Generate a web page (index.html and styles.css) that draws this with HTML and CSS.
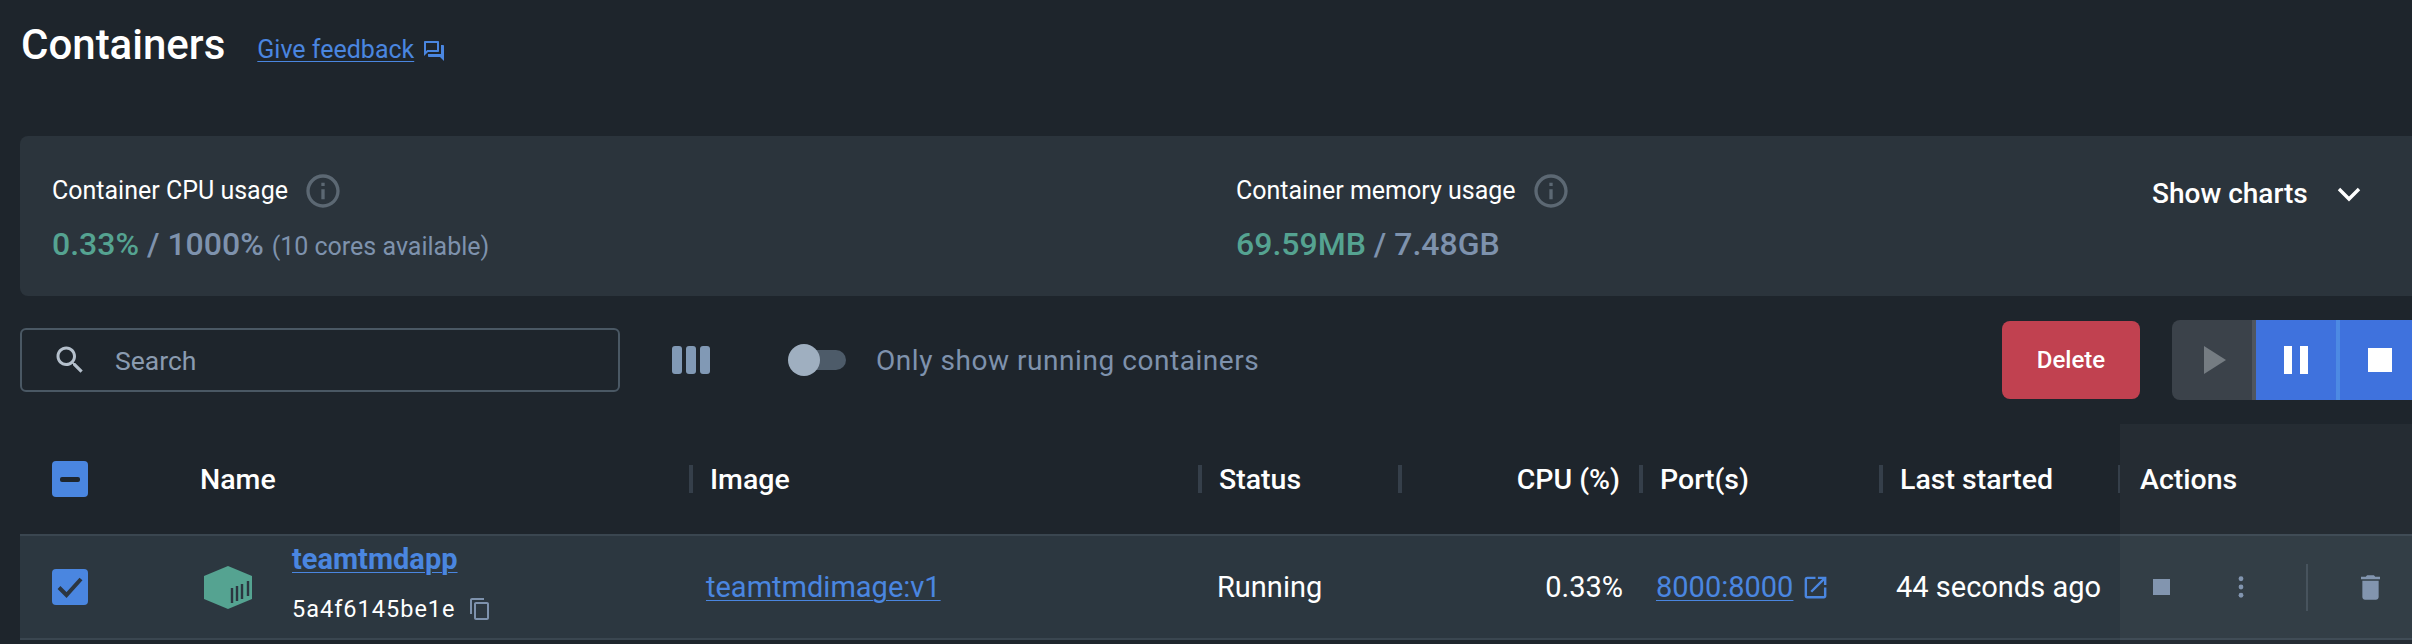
FILE: index.html
```html
<!DOCTYPE html>
<html lang="en">
<head>
  <meta charset="UTF-8">
  <title>Containers</title>
  <link rel="stylesheet" href="styles.css">
</head>
<body>
  <div class="page">
    <header class="title-bar">
      <h1>Containers</h1>
      <a class="link feedback" href="#">Give feedback</a>
      <svg class="feedback-icon" viewBox="0 0 24 24"><path d="M15 4v7H5.17L4 12.17V4h11m1-2H3c-.55 0-1 .45-1 1v14l4-4h10c.55 0 1-.45 1-1V3c0-.55-.45-1-1-1zm5 4h-2v9H6v2c0 .55.45 1 1 1h11l4 4V7c0-.55-.45-1-1-1z"/></svg>
    </header>

    <section class="usage">
      <div class="stat stat-cpu">
        <div class="stat-label">Container CPU usage
          <svg class="info-icon" viewBox="0 0 24 24"><path d="M11 7h2v2h-2zm0 4h2v6h-2zm1-9C6.48 2 2 6.48 2 12s4.48 10 10 10 10-4.48 10-10S17.52 2 12 2zm0 18c-4.41 0-8-3.59-8-8s3.59-8 8-8 8 3.59 8 8-3.59 8-8 8z"/></svg>
        </div>
        <div class="stat-value"><span class="green">0.33%</span> / 1000% <small>(10 cores available)</small></div>
      </div>
      <div class="stat stat-mem">
        <div class="stat-label">Container memory usage
          <svg class="info-icon" viewBox="0 0 24 24"><path d="M11 7h2v2h-2zm0 4h2v6h-2zm1-9C6.48 2 2 6.48 2 12s4.48 10 10 10 10-4.48 10-10S17.52 2 12 2zm0 18c-4.41 0-8-3.59-8-8s3.59-8 8-8 8 3.59 8 8-3.59 8-8 8z"/></svg>
        </div>
        <div class="stat-value"><span class="green">69.59MB</span> / 7.48GB</div>
      </div>
      <div class="show-charts">Show charts
        <svg class="chevron" viewBox="0 0 24 16"><path d="M2 3l10 10L22 3" fill="none" stroke="#fff" stroke-width="3.4"/></svg>
      </div>
    </section>

    <section class="toolbar">
      <div class="search">
        <svg class="search-icon" viewBox="0 0 24 24"><path d="M15.5 14h-.79l-.28-.27C15.41 12.59 16 11.11 16 9.5 16 5.91 13.09 3 9.5 3S3 5.91 3 9.5 5.91 16 9.5 16c1.61 0 3.09-.59 4.23-1.57l.27.28v.79l5 4.99L20.49 19l-4.99-5zm-6 0C7.01 14 5 11.99 5 9.5S7.01 5 9.5 5 14 7.01 14 9.5 11.99 14 9.5 14z"/></svg>
        <span>Search</span>
      </div>
      <div class="columns-btn"><i></i><i></i><i></i></div>
      <div class="toggle"><span class="track"></span><span class="thumb"></span></div>
      <span class="toggle-label">Only show running containers</span>
      <button class="delete-btn">Delete</button>
      <div class="run-group">
        <button class="run-btn play"><svg viewBox="0 0 22 28"><path d="M0 0l22 14L0 28z"/></svg></button>
        <button class="run-btn pause"><i></i><i></i></button>
        <button class="run-btn stop"><i></i></button>
      </div>
    </section>

    <section class="table">
      <div class="grid head">
        <div class="cell check-cell"><span class="check"><i class="dash"></i></span></div>
        <div class="cell">Name</div>
        <div class="cell sep">Image</div>
        <div class="cell sep">Status</div>
        <div class="cell sep right">CPU (%)</div>
        <div class="cell sep">Port(s)</div>
        <div class="cell sep">Last started</div>
        <div class="cell sep thin actions-head">Actions</div>
      </div>
      <div class="grid row">
        <div class="cell check-cell"><span class="check">
          <svg viewBox="0 0 36 36"><path d="M7 18.5l7.5 7.5L29 10" fill="none" stroke="#2c3640" stroke-width="4"/></svg>
        </span></div>
        <div class="cell name-cell">
          <svg class="box-icon" viewBox="0 0 48 43">
            <path d="M24 0l24 10v23L24 43 0 33V10z" fill="#55a391"/>
            <path d="M28 22v15M33 20v15M38 18v15M44 15v15" fill="none" stroke="#2c3640" stroke-width="2.4"/>
          </svg>
          <div class="name-text">
            <a class="link name-link" href="#">teamtmdapp</a>
            <div class="short-id">5a4f6145be1e
              <svg class="copy-icon" viewBox="0 0 24 24"><path d="M16 1H4c-1.1 0-2 .9-2 2v14h2V3h12V1zm3 4H8c-1.1 0-2 .9-2 2v14c0 1.1.9 2 2 2h11c1.1 0 2-.9 2-2V7c0-1.1-.9-2-2-2zm0 16H8V7h11v14z"/></svg>
            </div>
          </div>
        </div>
        <div class="cell image-cell"><a class="link" href="#">teamtmdimage:v1</a></div>
        <div class="cell status-cell">Running</div>
        <div class="cell right cpu-cell">0.33%</div>
        <div class="cell port-cell"><a class="link" href="#">8000:8000</a>
          <svg class="open-icon" viewBox="0 0 24 24"><path d="M19 19H5V5h7V3H5c-1.11 0-2 .9-2 2v14c0 1.1.89 2 2 2h14c1.1 0 2-.9 2-2v-7h-2v7zM14 3v2h3.59l-9.83 9.83 1.41 1.41L19 6.41V10h2V3h-7z"/></svg>
        </div>
        <div class="cell started-cell">44 seconds ago</div>
        <div class="cell actions-cell">
          <i class="stop-small"></i>
          <svg class="kebab" viewBox="0 0 6 24"><circle cx="3" cy="3" r="2.6"/><circle cx="3" cy="12" r="2.6"/><circle cx="3" cy="21" r="2.6"/></svg>
          <i class="action-sep"></i>
          <svg class="trash" viewBox="5 3 14 18"><path d="M6 19c0 1.1.9 2 2 2h8c1.1 0 2-.9 2-2V7H6v12zM19 4h-3.5l-1-1h-5l-1 1H5v2h14V4z"/></svg>
        </div>
      </div>
    </section>
  </div>
  <div class="actions-shade"></div>
</body>
</html>
```

FILE: styles.css
```css
html, body { height: 100%; margin: 0; overflow: hidden; }
body { background: #1e252c; font-family: Roboto, sans-serif; color: #fff; position: relative; }
button { border: none; padding: 0; font-family: inherit; }
.link { color: #4a86e0; text-decoration: underline; text-underline-offset: 3px; text-decoration-thickness: 1px; }
.green { color: #55a391; }

.page { padding-left: 20px; }

/* title */
.title-bar { height: 136px; display: flex; align-items: flex-start; }
.title-bar h1 { margin: 21px 0 0 1px; font-size: 42px; line-height: 48px; font-weight: 500; }
.feedback { margin: 34px 0 0 32px; font-size: 25px; line-height: 32px; }
.feedback-icon { width: 24px; height: 24px; margin: 39px 0 0 8px; fill: #4a86e0; }

/* usage card */
.usage {
  height: 160px; background: #2b343c; border-radius: 8px 0 0 8px;
  display: flex; box-sizing: border-box; padding: 35px 0 0 32px;
}
.stat-cpu { width: 1184px; }
.stat-mem { width: 917px; }
.stat-label { font-size: 25px; line-height: 32px; display: flex; align-items: center; }
.info-icon { width: 40px; height: 40px; margin-left: 15px; fill: #5c6873; }
.stat-value { margin-top: 11px; font-size: 32px; line-height: 44px; font-weight: 500; color: #7e92ad; }
.stat-value small { font-size: 25px; font-weight: 400; }
.show-charts { font-size: 28px; line-height: 36px; font-weight: 500; display: flex; align-items: center; margin-top: 5px; height: 36px; margin-left: -1px; }
.chevron { width: 24px; height: 16px; margin-left: 29px; }

/* toolbar */
.toolbar { display: flex; align-items: center; height: 80px; margin-top: 24px; }
.search {
  width: 600px; height: 64px; box-sizing: border-box; border: 2px solid #4a5864; border-radius: 6px;
  display: flex; align-items: center; padding-left: 30px; font-size: 26.5px; color: #8a9bb0;
}
.search-icon { width: 36px; height: 36px; fill: #b5c0cc; margin-right: 27px; }
.columns-btn { display: flex; gap: 4px; margin-left: 52px; }
.columns-btn i { width: 10px; height: 28px; border-radius: 3px; background: #8199b5; }
.toggle { position: relative; width: 58px; height: 32px; margin-left: 78px; }
.track { position: absolute; left: 12px; top: 6px; width: 46px; height: 20px; border-radius: 10px; background: #4d5b69; }
.thumb { position: absolute; left: 0; top: 0; width: 32px; height: 32px; border-radius: 50%; background: #9fafc0; }
.toggle-label { margin-left: 30px; font-size: 28px; color: #7e92ad; letter-spacing: 0.55px; }
.delete-btn {
  margin-left: auto; width: 138px; height: 78px; border-radius: 8px;
  background: #c14150; color: #fff; font-size: 24px; font-weight: 500;
}
.run-group { display: flex; flex: none; margin: 0 -8px 0 32px; height: 80px; width: 248px; }
.run-btn { height: 80px; flex: none; display: flex; align-items: center; justify-content: center; background: #3f72dd; }
.run-btn.play { width: 84px; box-sizing: border-box; padding-left: 6px; background: #3b424a; border-right: 4px solid #50565e; border-radius: 8px 0 0 8px; }
.play svg { width: 22px; height: 28px; fill: #757c82; }
.run-btn.pause { width: 84px; box-sizing: border-box; border-right: 4px solid #4d8ae3; gap: 8px; }
.pause i { width: 8px; height: 28px; background: #fff; }
.run-btn.stop { width: 80px; }
.stop i { width: 24px; height: 24px; background: #fff; }

/* table */
.grid { display: grid; grid-template-columns: 180px 489px 509px 200px 241px 240px 239px 1fr; }
.head { height: 134px; font-size: 28.5px; font-weight: 500; }
.head .cell { height: 28px; margin-top: 65px; display: flex; align-items: center; white-space: nowrap; }
.head .sep { border-left: 4px solid #353f4a; padding-left: 17px; }
.head .sep.thin { border-left-width: 2px; padding-left: 20px; }
.head .right { justify-content: flex-end; padding-right: 19px; }
.head .check-cell { padding-left: 32px; }
.check {
  width: 36px; height: 36px; border-radius: 4px; background: #4a86e0;
  display: flex; align-items: center; justify-content: center; flex: none;
}
.dash { width: 20px; height: 5px; border-radius: 2px; background: #1e252c; }
.check svg { width: 36px; height: 36px; }

.row {
  height: 106px; box-sizing: border-box; background: #2c3740;
  border-top: 2px solid #3a4650; border-bottom: 2px solid #3a4650;
  font-size: 29px; align-items: center;
}
.row .check-cell { padding-left: 32px; }
.name-cell { display: flex; align-items: center; padding-left: 4px; }
.box-icon { width: 48px; height: 43px; flex: none; }
.name-text { margin-left: 40px; margin-top: -8px; }
.name-link { display: block; font-size: 29px; line-height: 34px; font-weight: 700; }
.short-id { display: flex; align-items: center; margin-top: 18px; font-size: 23.5px; line-height: 30px; letter-spacing: 1px; }
.copy-icon { width: 24px; height: 24px; margin-left: 12px; fill: #7e92ad; }
.image-cell { padding-left: 17px; }
.status-cell { padding-left: 19px; }
.row .right { text-align: right; padding-right: 16px; }
.port-cell { display: flex; align-items: center; padding-left: 17px; }
.open-icon { width: 29px; height: 29px; margin-left: 8px; fill: #4a86e0; }
.started-cell { padding-left: 17px; white-space: nowrap; }
.actions-cell { display: flex; align-items: center; padding-left: 35px; }
.stop-small { width: 17px; height: 16px; background: #7e92ad; }
.kebab { width: 6px; height: 22px; margin-left: 68px; fill: #7e92ad; }
.action-sep { width: 2px; height: 47px; margin-left: 62px; background: #414d58; }
.trash { width: 19px; height: 25px; margin-left: 53px; fill: #7e92ad; }

/* shaded column sits over the table */
.actions-shade {
  position: absolute; left: 2120px; right: 0; top: 424px; bottom: 0;
  background: rgba(255,255,255,0.035); pointer-events: none;
}
```
